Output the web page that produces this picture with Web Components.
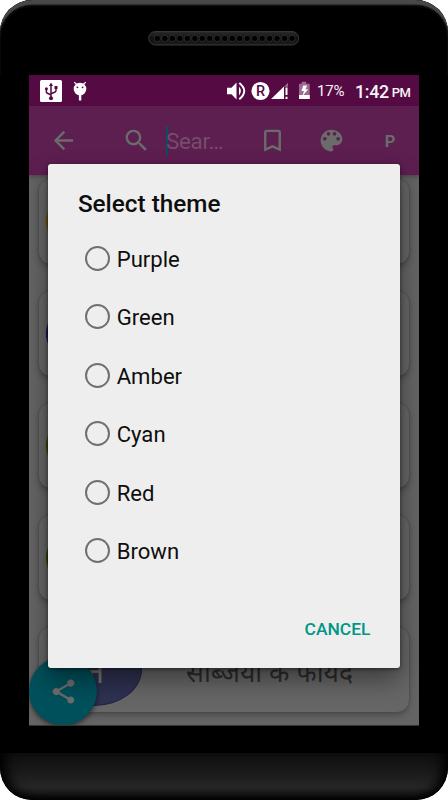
<!DOCTYPE html>
<html lang="en"><head><meta charset="utf-8"><title>Select theme</title>
<style>html,body{margin:0;background:#fff}body{width:448px;height:800px;overflow:hidden;font-family:Roboto,"Liberation Sans",sans-serif}</style></head>
<body>
<phone-frame>
  <status-bar></status-bar>
  <app-toolbar></app-toolbar>
  <card-list>
    <topic-card style="--c:#6e5205;--e:#6a5005"></topic-card>
    <topic-card style="--c:#24104f;--e:#24104f"></topic-card>
    <topic-card style="--c:#3d4505;--e:#3f4705"></topic-card>
    <topic-card style="--c:#274503;--e:#2a4a04"></topic-card>
    <topic-card style="--c:#2e3150;--e:#1f2449"><span slot="letter">न</span>सब्जियों के फायदे</topic-card>
  </card-list>
  <share-button slot="over"></share-button>
  <theme-dialog slot="over">
    <span slot="title">Select theme</span>
    <radio-option>Purple</radio-option><radio-option>Green</radio-option><radio-option>Amber</radio-option>
    <radio-option>Cyan</radio-option><radio-option>Red</radio-option><radio-option>Brown</radio-option>
    <span slot="action">CANCEL</span>
  </theme-dialog>
</phone-frame>
<script>
const define=(name,html)=>customElements.define(name,class extends HTMLElement{
  constructor(){super();const t=document.createElement('template');t.innerHTML=html;this.attachShadow({mode:'open'}).append(t.content.cloneNode(true));}
});

define('phone-frame',`<style>
:host{display:flex;flex-direction:column;align-items:center;width:448px;height:800px;box-sizing:border-box;position:relative;overflow:hidden;background:#000;border-radius:32px;}
.top{align-self:stretch;height:75px;box-sizing:border-box;padding-top:30px;display:flex;justify-content:center;border-radius:32px 32px 0 0;box-shadow:inset 0 5px 1px -0.5px #484848,inset 0 6px 3px -1px #2a2a2a;background:#000}
.top svg{display:block;margin-right:1px}
.screen{position:relative;width:390px;height:650px;overflow:hidden;background:#646464;display:flex;flex-direction:column}
.edge{height:1px;width:390px;background:#333}
.chin{margin-top:27px;align-self:stretch;height:47px;background:linear-gradient(#0e0e0e,#1b1b1b 45%,#262626 72%,#202020 80%,#050505);border-radius:0 0 32px 32px;box-shadow:inset 13px -3px 12px -7px #000,inset -13px -3px 12px -7px #000}
</style>
<div class="top"><svg width="153" height="16" viewBox="147 30 153 16"><defs><linearGradient id="s" x2="0" y2="1"><stop stop-color="#2b2b2b"/><stop offset=".5" stop-color="#111"/><stop offset="1" stop-color="#1c1c1c"/></linearGradient></defs>
<rect x="148.7" y="31.5" width="150" height="13.5" rx="6.7" fill="url(#s)" stroke="#383838"/><g id="holes"></g></svg></div>
<div class="screen"><slot></slot><slot name="over"></slot></div><div class="edge"></div>
<div class="chin"></div>`);
const holes=document.querySelector('phone-frame').shadowRoot.querySelector('#holes');
for(let i=0;i<19;i++){const c=document.createElementNS('http://www.w3.org/2000/svg','circle');
  for(const [k,v] of Object.entries({cx:157.4+i*7.48,cy:38.4,r:3.2,fill:'#000',stroke:'#333','stroke-width':.8}))c.setAttribute(k,v);holes.append(c);}

define('status-bar',`<style>
:host{display:flex;align-items:center;height:31px;flex:none;background:#560a44;color:#f8f4f7;padding-left:11px;box-sizing:border-box}
svg{display:block;flex:none}.usb{margin-right:11px}.bug{margin-right:139px}
.pct{font-size:15px;margin-left:5px;width:38px;line-height:31px;padding-top:1px;letter-spacing:-.15px}
.time{font-size:17.8px;font-weight:500;line-height:31px;padding-top:1px;letter-spacing:-.3px}.pm{font-size:13px;font-weight:500;margin-left:3px;line-height:31px;padding-top:3px;letter-spacing:-.6px}
</style>
<svg class="usb" width="22" height="22" viewBox="0 0 22 22"><rect width="22" height="22" rx="1.5" fill="#fff"/><g fill="none" stroke="#560a44" stroke-width="1.5"><path d="M11 5V18M11 15 L7 13Q6.4 12.7 6.4 12V8.5M11 13.8 15 12Q16 11.5 16 10.5V7.5"/></g><g fill="#560a44"><path d="M11 2.4 13 6H9z"/><circle cx="11" cy="18.2" r="2"/><circle cx="6.4" cy="8.7" r="1.5"/><path d="M14.5 6h3v3h-3z"/></g></svg>
<svg class="bug" width="14" height="22" viewBox="0 0 14 22"><path d="M1.2 2.2 3.8 4.2M12.8 2.2 10.2 4.2" stroke="#fff" stroke-width="1.1"/><circle cx="7" cy="9" r="6.3" fill="#fff"/><path d="M5.9 13h2.4v7.5H5.9z" fill="#fff"/><circle cx="4.4" cy="7.3" r=".9" fill="#560a44"/><circle cx="9.6" cy="7.3" r=".9" fill="#560a44"/></svg>
<svg width="86" height="22" viewBox="226 80 86 22"><g fill="#fff"><path d="M227 87.8h4.500l5-5.200v17l-5-5.300H227z"/><path d="M239 86.500q3.800 4.500 0 9z"/><path d="M239.300 82.900q9.900 8.100 0 16.300" fill="none" stroke="#fff" stroke-width="2"/><circle cx="260.500" cy="91" r="9.100"/></g><text x="260.600" y="96.200" text-anchor="middle" font-family="Roboto" font-size="14.500" font-weight="500" fill="#560a44">R</text>
<path d="M271.200 99 288 82.800V99z" fill="#9b6b90"/><path d="M271.200 99 284 86.600V99z" fill="#fff"/><path d="M284 86.800h4V99h-4z" fill="#560a44"/><path d="M285.500 87.500h2v7.500h-2zM285.500 96.700h2V99h-2z" fill="#fff"/>
<path d="M299 83.800h2.700v-2h4.500v2h3.500V99H299z" fill="#9b6b90"/><path d="M299 95h10.700v4H299z" fill="#fff"/><path d="m303.200 85.500h4l-1.700 3.700h2.700l-5.700 6.700 1.400-5h-2.500z" fill="#fff"/></svg>
<span class="pct">17%</span><span class="time">1:42</span><span class="pm">PM</span>`);

define('app-toolbar',`<style>
:host{display:grid;grid-template-columns:20px 29px 44px 29px 15px 77px 15px 29px 30px 29px 29px 30px;align-items:center;height:69px;flex:none;background:#5d1e50;color:#6b6b6b;box-shadow:0 2px 4px #3338;position:relative}
svg{width:29px;height:29px;fill:#6b6b6b;display:block}
.f{font-size:22.5px;line-height:30px;color:#754c6d;border-left:2px solid #075064;box-sizing:border-box;height:30px;width:77px;white-space:nowrap;display:block;letter-spacing:-.35px}.f span{margin-left:-2px}.p{font-size:16.5px;font-weight:700;text-align:center;padding-top:1px}
</style><i></i>
<svg viewBox="0 0 24 24"><path d="M20 11H7.83l5.59-5.59L12 4l-8 8 8 8 1.41-1.41L7.83 13H20v-2z"/></svg><i></i>
<svg viewBox="0 0 24 24"><path d="M15.5 14h-.79l-.28-.27C15.41 12.59 16 11.11 16 9.5 16 5.91 13.09 3 9.5 3S3 5.91 3 9.5 5.91 16 9.5 16c1.61 0 3.09-.59 4.23-1.57l.27.28v.79l5 4.99L20.49 19l-4.99-5zm-6 0C7.01 14 5 11.99 5 9.5S7.01 5 9.5 5 14 7.01 14 9.5 11.99 14 9.5 14z"/></svg><i></i>
<div class="f"><span>Sear…</span></div><i></i>
<svg viewBox="0 0 24 24"><path d="M17 3H7c-1.1 0-2 .9-2 2v16l7-3 7 3V5c0-1.1-.9-2-2-2zm0 15-5-2.18L7 18V5h10v13z"/></svg><i></i>
<svg viewBox="0 0 24 24"><path d="M12 3c-4.97 0-9 4.03-9 9s4.03 9 9 9c.83 0 1.5-.67 1.5-1.5 0-.39-.15-.74-.39-1.01-.23-.26-.38-.61-.38-.99 0-.83.67-1.5 1.5-1.5H16c2.76 0 5-2.24 5-5 0-4.42-4.03-8-9-8zm-5.5 9c-.83 0-1.5-.67-1.5-1.5S5.67 9 6.5 9 8 9.67 8 10.5 7.33 12 6.5 12zm3-4C8.67 8 8 7.33 8 6.5S8.67 5 9.5 5s1.5.67 1.5 1.5S10.33 8 9.5 8zm5 0c-.83 0-1.5-.67-1.5-1.5S13.67 5 14.5 5s1.5.67 1.5 1.5S15.33 8 14.5 8zm3 4c-.83 0-1.5-.67-1.5-1.5S16.67 9 17.5 9s1.5.67 1.5 1.5-.67 1.5-1.5 1.5z"/></svg><i></i>
<span class="p">P</span>`);

define('card-list',`<style>:host{display:flex;flex-direction:column;gap:27px;padding:4px 10px 0;flex:none}</style><slot></slot>`);
define('topic-card',`<style>
:host{display:flex;align-items:center;height:85px;box-sizing:border-box;padding-left:7px;border-radius:12px;background:#666;box-shadow:0 3px 6px #0004,0 0 2px #0003;color:#2c2c2c;font:26.5px/40px "Noto Sans",sans-serif}
.o{width:96px;height:73px;border-radius:50%;background:var(--c);border:1.5px solid var(--e);box-sizing:border-box;flex:none;display:flex;align-items:center;justify-content:center;color:#777;font-size:34px;padding-left:2px}
.t{flex:1;text-align:center;padding:4px 12px 0 0;white-space:nowrap}
</style><div class="o"><slot name="letter"></slot></div><div class="t"><slot></slot></div>`);

define('share-button',`<style>:host{position:absolute;left:0;bottom:0;width:68px;height:68px;border-radius:50%;background:#00505b;box-shadow:0 2px 5px #0008;display:flex;align-items:center;justify-content:center}svg{width:29px;height:29px;fill:#6c6c6c}</style>
<svg viewBox="0 0 24 24"><path d="M18 16.08c-.76 0-1.44.3-1.96.77L8.91 12.7c.05-.23.09-.46.09-.7s-.04-.47-.09-.7l7.05-4.11c.54.5 1.25.81 2.04.81 1.66 0 3-1.34 3-3s-1.34-3-3-3-3 1.34-3 3c0 .24.04.47.09.7L8.04 9.81C7.5 9.31 6.79 9 6 9c-1.66 0-3 1.34-3 3s1.34 3 3 3c.79 0 1.5-.31 2.04-.81l7.12 4.16c-.05.21-.08.43-.08.65 0 1.61 1.31 2.92 2.92 2.92s2.92-1.31 2.92-2.92-1.31-2.92-2.92-2.92z"/></svg>`);

define('theme-dialog',`<style>
:host{position:absolute;left:19.4px;top:89px;width:351.4px;height:503.5px;box-sizing:border-box;background:#eee;border-radius:3px;box-shadow:0 12px 24px #0006,0 1px 4px #0007;display:flex;flex-direction:column;color:#0e0e0e}
.t{padding:24px 29.5px 0;font-size:24.3px;line-height:31px;font-weight:500;height:15.2px}
.o{margin-top:26px;display:flex;flex-direction:column}
.a{margin-top:auto;padding:0 29.4px 28px;text-align:right;font-size:17.4px;line-height:22px;font-weight:500;color:#009688}
</style><div class="t"><slot name="title"></slot></div><div class="o"><slot></slot></div><div class="a"><slot name="action"></slot></div>`);
define('radio-option',`<style>:host{display:flex;align-items:center;height:58.5px;padding-left:36.5px;font-size:22.1px;line-height:30px}i{width:25px;height:25px;box-sizing:border-box;border:2.3px solid #707070;border-radius:50%;margin-right:6.8px}span{padding-top:1px}</style><i></i><span><slot></slot></span>`);
</script>
</body></html>
